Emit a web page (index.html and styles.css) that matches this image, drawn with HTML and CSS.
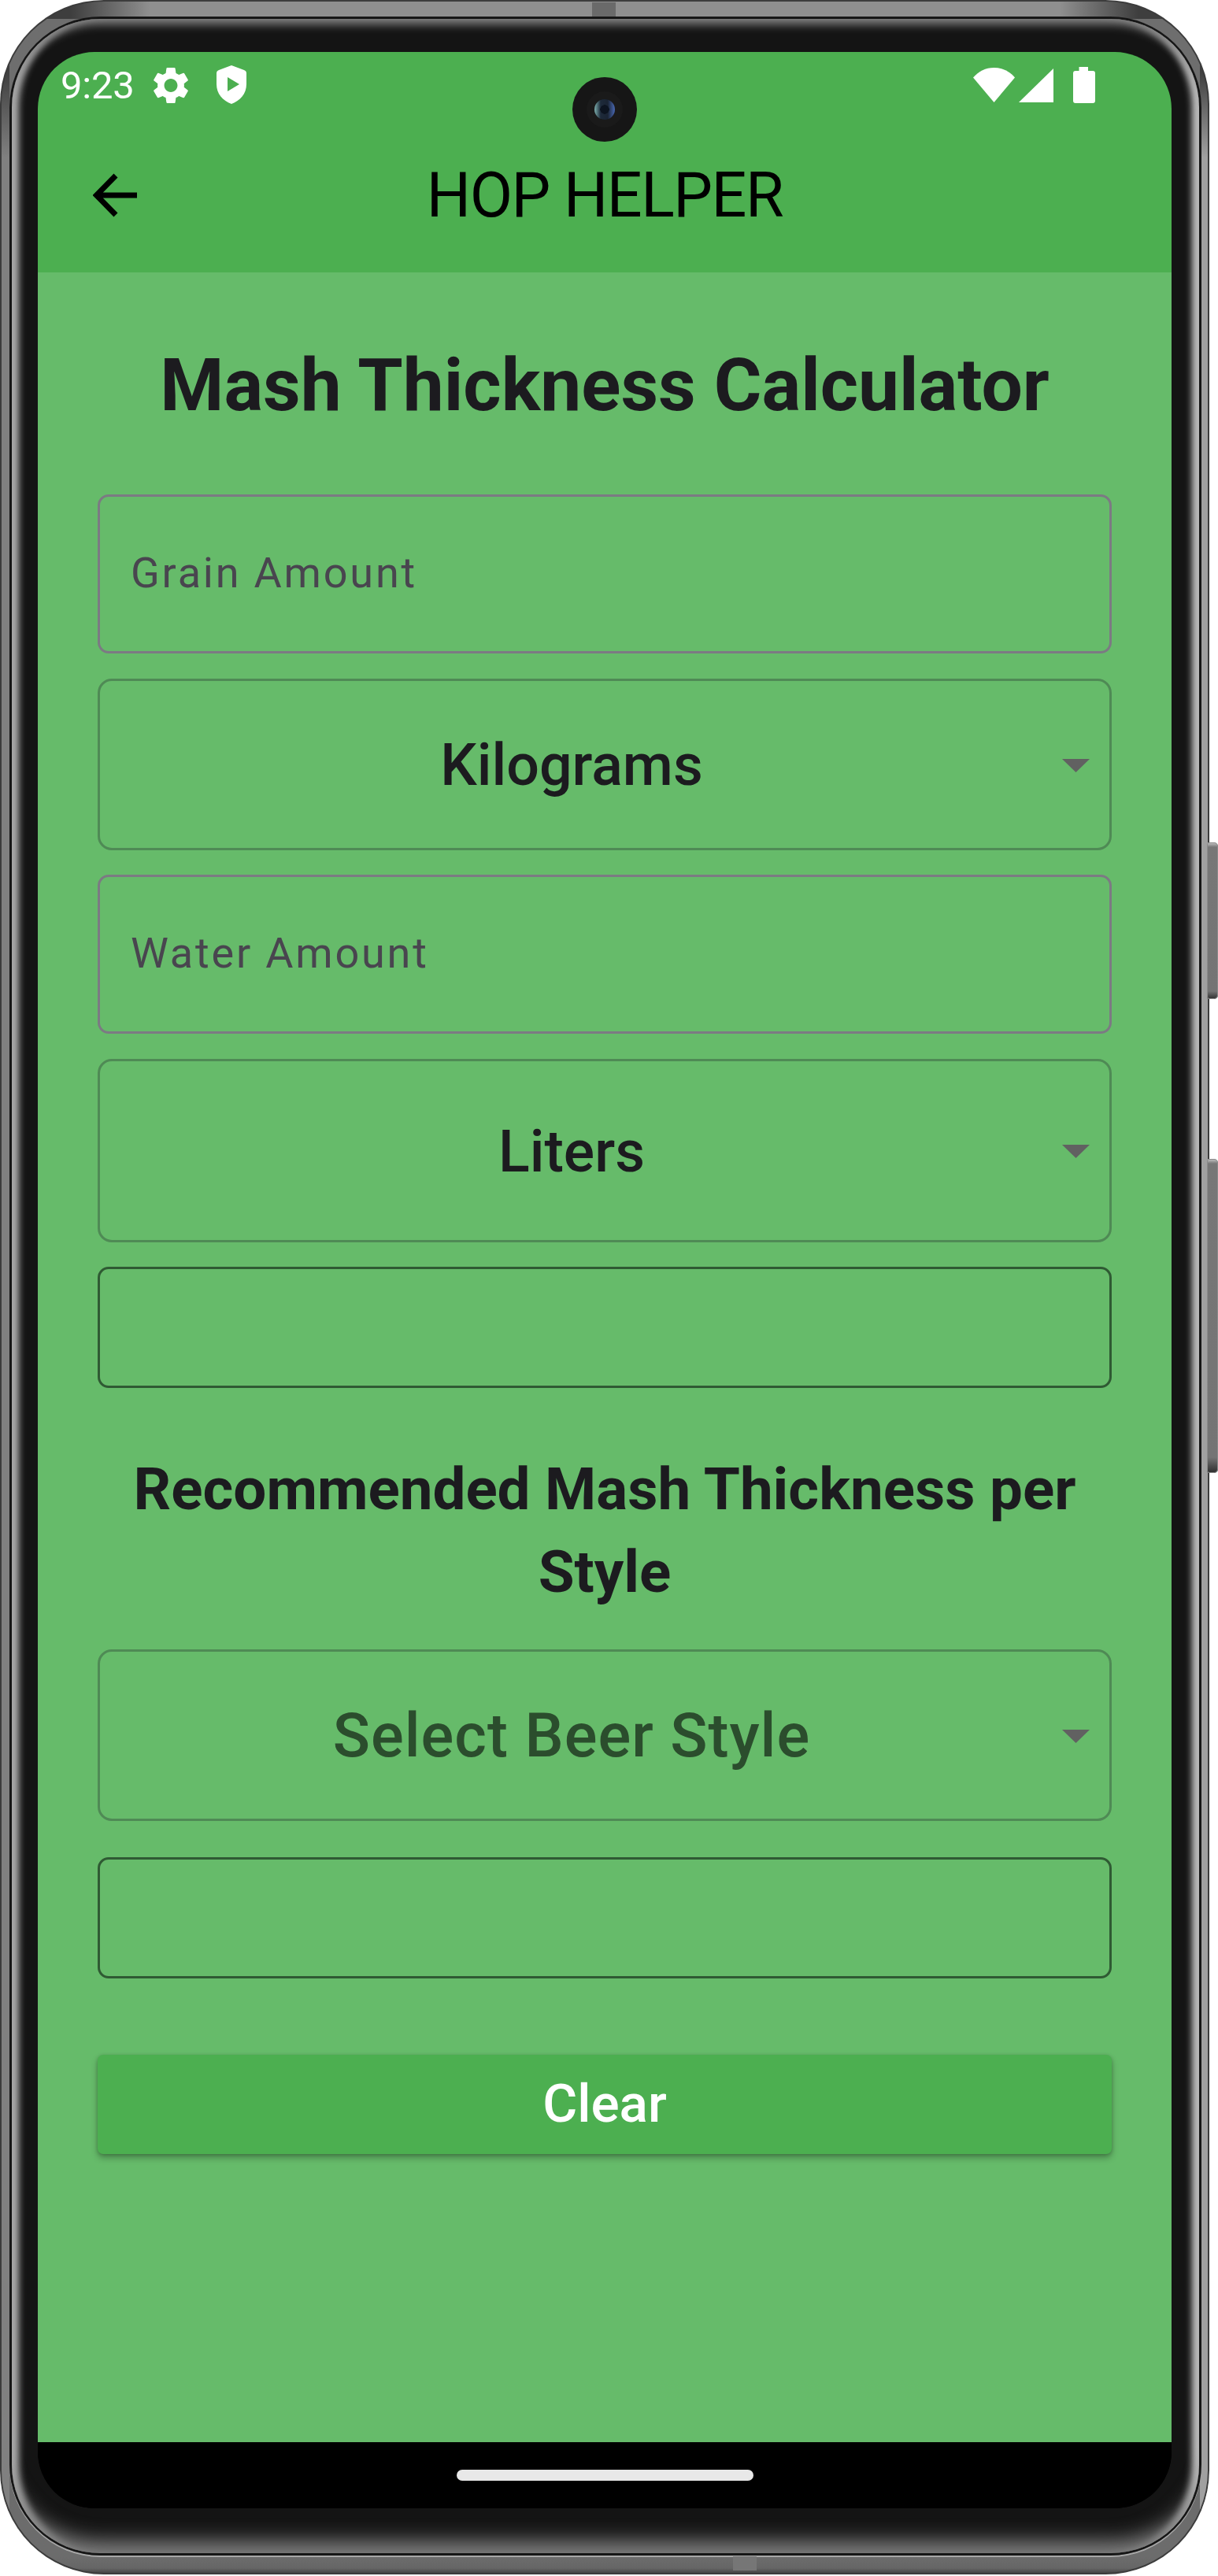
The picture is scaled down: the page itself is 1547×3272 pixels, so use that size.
FILE: index.html
```html
<!DOCTYPE html>
<html lang="en">
<head>
<meta charset="utf-8">
<title>Hop Helper</title>
<link rel="stylesheet" href="styles.css">
</head>
<body>
<div class="device">
  <span class="seam seam-top"></span>
  <span class="seam seam-bottom"></span>
  <span class="side-key side-key-power"></span>
  <span class="side-key side-key-volume"></span>
  <div class="glass">
    <div class="bezel">
      <div class="screen">
        <header class="appbar">
          <div class="status">
            <span class="time">9:23</span>
            <svg class="ic-gear" viewBox="2.7 2.4 18.6 19.2"><path d="M19.14 12.94c.04-.3.06-.61.06-.94 0-.32-.02-.64-.07-.94l2.03-1.58c.18-.14.23-.41.12-.61l-1.92-3.32c-.12-.22-.37-.29-.59-.22l-2.39.96c-.5-.38-1.03-.7-1.62-.94l-.36-2.54c-.04-.24-.24-.41-.48-.41h-3.84c-.24 0-.43.17-.47.41l-.36 2.54c-.59.24-1.13.57-1.62.94l-2.39-.96c-.22-.08-.47 0-.59.22L2.74 8.87c-.12.21-.08.47.12.61l2.03 1.58c-.05.3-.09.63-.09.94s.02.64.07.94l-2.03 1.58c-.18.14-.23.41-.12.61l1.92 3.32c.12.22.37.29.59.22l2.39-.96c.5.38 1.03.7 1.62.94l.36 2.54c.05.24.24.41.48.41h3.84c.24 0 .44-.17.47-.41l.36-2.54c.59-.24 1.13-.56 1.62-.94l2.39.96c.22.08.47 0 .59-.22l1.92-3.32c.12-.22.07-.47-.12-.61l-2.01-1.58zM12 15.6c-1.98 0-3.6-1.62-3.6-3.6s1.62-3.6 3.6-3.6 3.6 1.62 3.6 3.6-1.62 3.6-3.6 3.6z"/></svg>
            <svg class="ic-shield" viewBox="0 0 38 49"><path fill-rule="evenodd" d="M19 0 L35 6 Q38 7.200 38 10 V24 C38 36 30 45 19 49 C8 45 0 36 0 24 V10 Q0 7.200 3 6 Z M14 15 V33 L29 24 Z"/></svg>
            <span class="status-gap"></span>
            <svg class="ic-wifi" viewBox="0 0 53 44"><path d="M0 12.500 C7 4.500 16 0 26.500 0 C37 0 46 4.500 53 12.500 L26.500 44 Z"/></svg>
            <svg class="ic-signal" viewBox="0 0 44 43"><path d="M44 0 V43 H0 Z"/></svg>
            <svg class="ic-battery" viewBox="0 0 28 46"><path d="M7.500 0 H19 V5 H25 Q28 5 28 8 V43 Q28 46 25 46 H3 Q0 46 0 43 V8 Q0 5 3 5 H7.500 Z"/></svg>
          </div>
          <div class="toolbar">
            <svg class="ic-back" viewBox="0 0 56 56"><path d="M56 28 H6 M29 3 L4.500 28 L29 53"/></svg>
            <div class="app-title">HOP HELPER</div>
          </div>
        </header>
        <span class="camera"><span class="lens"></span></span>
        <main class="content">
          <h1 class="page-title">Mash Thickness Calculator</h1>
          <div class="field field-input">Grain Amount</div>
          <div class="field field-select field-select-a"><span class="select-label">Kilograms</span><svg class="caret" viewBox="0 0 35 17"><path d="M0 0 H35 L17.500 17 Z"/></svg></div>
          <div class="field field-input">Water Amount</div>
          <div class="field field-select field-select-b"><span class="select-label">Liters</span><svg class="caret" viewBox="0 0 35 17"><path d="M0 0 H35 L17.500 17 Z"/></svg></div>
          <div class="field field-output"></div>
          <h2 class="section-title">Recommended Mash Thickness per Style</h2>
          <div class="field field-select field-select-a"><span class="select-label select-hint">Select Beer Style</span><svg class="caret" viewBox="0 0 35 17"><path d="M0 0 H35 L17.500 17 Z"/></svg></div>
          <div class="field field-output field-output-last"></div>
          <button class="clear" type="button">Clear</button>
        </main>
        <footer class="navbar"><span class="home-pill"></span></footer>
      </div>
    </div>
  </div>
</div>
</body>
</html>
```

FILE: styles.css
```css
* { box-sizing: border-box; }
html, body { margin: 0; padding: 0; background: #fff; }
body { width: 1547px; height: 3272px; overflow: hidden; font-family: Roboto, "Liberation Sans", sans-serif; }

/* hardware frame */
.device {
  position: relative;
  width: 1536px;
  height: 3270px;
  padding: 21px 10px 24px 12px;
  border-radius: 132px;
  background:
    linear-gradient(90deg, #3e3e3e 0, #3e3e3e 90px, #8f8f8f 190px, #8f8f8f 1346px, #3e3e3e 1446px, #3e3e3e 100%) 0 0 / 100% 24px no-repeat,
    linear-gradient(#3e3e3e 0, #3e3e3e 90px, #808080 200px) 0 0 / 12px 3270px no-repeat,
    linear-gradient(#3e3e3e 0, #3e3e3e 90px, #a0a0a0 200px) 100% 0 / 12px 3270px no-repeat,
    linear-gradient(#6e6e6e 0, #6c6c6c 3248px, #666 3262px, #3c3c3c 3270px);
  box-shadow: inset 0 0 0 2px #3c3c3c;
}
.seam { position: absolute; background: #6a6a6a; }
.seam-top { left: 752px; top: 3px; width: 30px; height: 18px; }
.seam-bottom { left: 931px; top: 3247px; width: 30px; height: 18px; background: #767676; }
.side-key {
  position: absolute;
  left: 1533px;
  width: 14px;
  border-radius: 3px 5px 5px 3px;
  background: linear-gradient(#c9c9c9 0, #777 6px, #747474 95%, #2c2c2c 100%);
  box-shadow: inset 0 0 0 1px #8b8b8b;
}
.side-key-power { top: 1070px; height: 199px; }
.side-key-volume { top: 1472px; height: 399px; }
.glass {
  height: 3225px;
  border: 3px solid #161616;
  border-radius: 116px;
  box-shadow: 0 2px 0 #a8a8a8;
}
.bezel {
  height: 100%;
  padding: 42px 35px 57px 33px;
  border-radius: 112px;
  background: #141414;
  box-shadow:
    inset 0 15px 12px -8px #808080,
    inset 0 -32px 24px -16px #7c7c7c,
    inset 14px 0 8px -5px #b0b0b0,
    inset -14px 0 8px -5px #c4c4c4;
}

/* screen */
.screen {
  position: relative;
  display: flex;
  flex-direction: column;
  height: 3120px;
  overflow: hidden;
  border-radius: 72px;
  background: #000;
}
.appbar { flex: none; height: 280px; background: #4caf50; }
.status { display: flex; align-items: center; height: 84px; padding: 0 97px 0 29px; }
.time { width: 92px; padding-top: 2px; color: #fff; font-size: 49px; line-height: 84px; letter-spacing: -.2px; }
.status svg { display: block; flex: none; fill: #fff; }
.ic-gear { width: 44px; height: 45px; margin-left: 26px; }
.ic-shield { width: 38px; height: 49px; margin-left: 36px; margin-top: -2px; }
.status-gap { flex: 1; }
.ic-wifi { width: 53px; height: 44px; }
.ic-signal { width: 44px; height: 43px; margin-left: 5px; }
.ic-battery { width: 28px; height: 46px; margin-left: 25px; }
.camera {
  position: absolute;
  left: 679px;
  top: 32px;
  display: flex;
  align-items: center;
  justify-content: center;
  width: 82px;
  height: 82px;
  border-radius: 50%;
  background: #161616;
}
.lens {
  width: 26px;
  height: 26px;
  border-radius: 50%;
  background: radial-gradient(circle at 50% 50%, #0c1420 0 30%, transparent 32%),
    linear-gradient(90deg, #7fb2b0 0, #1d2a3a 30%, #1a2433 65%, #4a69b5 100%);
  box-shadow: 0 0 0 10px #1a1a1a;
}
.toolbar {
  display: grid;
  grid-template-columns: 1fr auto 1fr;
  align-items: center;
  height: 196px;
  padding-left: 70px;
}
.ic-back { display: block; width: 56px; height: 56px; fill: none; stroke: #000; stroke-width: 7; }
.app-title { margin-left: -70px; color: #000; font-size: 79px; line-height: 100px; letter-spacing: -1.5px; white-space: nowrap; }

/* form */
.content {
  flex: 1;
  display: flex;
  flex-direction: column;
  padding: 84px 76px 0;
  background: #66bb6a;
}
.page-title {
  height: 120px;
  margin: 0 0 78px;
  color: #1c1b1f;
  font-size: 92.800px;
  font-weight: 700;
  line-height: 120px;
  text-align: center;
  white-space: nowrap;
}
.field { flex: none; border: 3px solid; border-radius: 14px; }
.field-input {
  display: flex;
  align-items: center;
  height: 202px;
  margin-bottom: 32px;
  padding: 0 0 4px 39px;
  border-color: #7c7a83;
  color: #49454f;
  font-size: 54px;
  letter-spacing: 2.800px;
}
.field-select {
  display: flex;
  align-items: center;
  margin-bottom: 31px;
  border-color: #4f8a55;
  border-radius: 18px;
}
.field-select-a { height: 218px; }
.field-select-b { height: 233px; }
.select-label {
  flex: 1;
  color: #1c1b1f;
  font-size: 73.500px;
  font-weight: 500;
  line-height: 90px;
  padding-top: 2px;
  text-align: center;
}
.select-hint { color: #2b4d2d; font-size: 78px; letter-spacing: 1px; }
.caret { display: block; flex: none; width: 35px; height: 17px; margin: 2px 25px 0 24px; fill: #616161; }
.field-output { height: 154px; border-color: #2f5a33; }
.section-title {
  margin: 76px 0 46px;
  color: #1c1b1f;
  font-size: 74.500px;
  font-weight: 700;
  line-height: 105px;
  text-align: center;
}
.section-title + .field-select { margin-bottom: 46px; }
.field-output-last { margin-bottom: 97px; }
.clear {
  flex: none;
  height: 126px;
  padding: 0 0 3px;
  border: 0;
  border-radius: 7px;
  background: #4caf50;
  box-shadow: 0 5px 8px rgba(0, 0, 0, .28), 0 1px 4px rgba(0, 0, 0, .18);
  color: #fff;
  font-family: inherit;
  font-size: 67.500px;
  font-weight: 500;
}
.navbar {
  flex: none;
  display: flex;
  justify-content: center;
  height: 84px;
  padding-top: 35px;
  background: #000;
}
.home-pill { width: 377px; height: 14px; border-radius: 7px; background: #e8e8e8; }
```
